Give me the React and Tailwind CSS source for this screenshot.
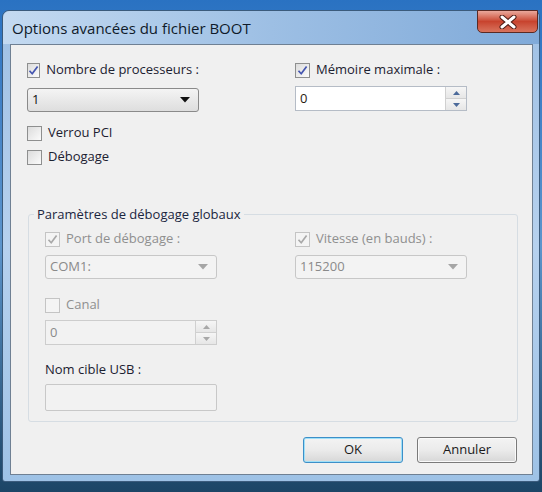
import React from "react";

const font = { fontFamily: '"Open Sans", "Noto Sans", "DejaVu Sans", sans-serif' };

function CheckBox({ checked, disabled }) {
  return (
    <span
      className={`flex items-center justify-center w-[15px] h-[15px] border ${
        disabled ? "border-[#c4c4c4] bg-[#f4f4f4]" : "border-[#8e8f8f] bg-gradient-to-br from-[#dcdcdc] to-[#fbfbfb]"
      }`}
    >
      {checked && (
        <svg width="11" height="11" viewBox="0 0 11 11">
          <path
            d="M1.5 5.8 L4.2 8.8 L9.6 1.4"
            fill="none"
            stroke={disabled ? "#a9a9a9" : "#4556b0"}
            strokeWidth="1.7"
            strokeLinejoin="round"
          />
        </svg>
      )}
    </span>
  );
}

function CheckRow({ label, checked, disabled, className = "" }) {
  return (
    <div className={`flex items-center h-[18px] gap-[6px] whitespace-nowrap ${className}`}>
      <CheckBox checked={checked} disabled={disabled} />
      <span className={`text-[13px] ${disabled ? "text-[#8f8f8f]" : "text-[#1c2130]"}`}>{label}</span>
    </div>
  );
}

function Select({ value, disabled, className = "" }) {
  return (
    <div
      className={`flex items-center justify-between w-[172px] h-[24px] rounded-[3px] border pl-[4px] pr-[8px] ${
        disabled
          ? "border-[#c7c7c7] bg-[#f3f3f3] text-[#8a8a8a]"
          : "border-[#8a8a8a] bg-gradient-to-b from-[#f4f4f4] to-[#dedede] text-[#111]"
      } ${className}`}
    >
      <span className="text-[13px]">{value}</span>
      <svg width="10" height="6" viewBox="0 0 10 6">
        <path d="M0 0 H10 L5 5.5 Z" fill={disabled ? "#a5a5a5" : "#111"} />
      </svg>
    </div>
  );
}

function Spin({ value, disabled, className = "" }) {
  const arrow = disabled ? "#a8a8a8" : "#4c6a9a";
  return (
    <div
      className={`flex w-[172px] h-[25px] border ${
        disabled ? "border-[#cdcdcd] bg-[#f2f2f2] text-[#8a8a8a]" : "border-[#b5bcc6] bg-white text-[#2a1a10]"
      } ${className}`}
    >
      <span className="flex-1 pl-[4px] text-[13px] leading-[23px]">{value}</span>
      <div className="flex flex-col w-[21px] border-l border-[#d0d0d0]">
        <div className="flex-1 flex items-center justify-center border-b border-[#d0d0d0] bg-gradient-to-b from-[#f6f6f6] to-[#e6e6e6]">
          <svg width="7" height="4" viewBox="0 0 7 4"><path d="M0 4 L3.5 0 L7 4 Z" fill={arrow} /></svg>
        </div>
        <div className="flex-1 flex items-center justify-center bg-gradient-to-b from-[#f6f6f6] to-[#e6e6e6]">
          <svg width="7" height="4" viewBox="0 0 7 4"><path d="M0 0 L3.5 4 L7 0 Z" fill={arrow} /></svg>
        </div>
      </div>
    </div>
  );
}

function Button({ label, focused }) {
  return (
    <button
      className={`w-[100px] h-[26px] rounded-[3px] border text-[13px] text-[#1a1a1a] bg-gradient-to-b from-[#f3f3f3] via-[#ebebeb] to-[#d7d7d7] ${
        focused ? "border-[#3c8fc8] shadow-[inset_0_0_0_1px_#9fe0f8]" : "border-[#7a7a7a] shadow-[inset_0_0_0_1px_#fafafa]"
      }`}
    >
      {label}
    </button>
  );
}

export default function App() {
  return (
    <div className="w-[542px] h-[492px] overflow-hidden bg-gradient-to-b from-[#2a72c2] via-[#5c95cc] to-[#1c4566] pt-[10px] pl-[2px]" style={font}>
      <div className="relative w-[538px] h-[472px] rounded-t-[7px] rounded-b-[3px] border border-[#3b5b7c] bg-gradient-to-b from-[#9fc0e4] via-[#b6d1ee] to-[#9ec2e6] flex flex-col">
        {/* title bar */}
        <div className="h-[33px] flex items-center pl-[9px] bg-gradient-to-r from-[#c4daf1] via-[#9dbfe4] to-[#80aad9] rounded-t-[7px]">
          <span className="text-[15px] text-[#0f1a2a] pt-[1px]">Options avancées du fichier BOOT</span>
        </div>
        <div className="absolute top-[-1px] right-[1px] w-[61px] h-[23px] rounded-b-[5px] border border-[#5a2a24] bg-gradient-to-b from-[#e9a89c] via-[#c8432e] to-[#d8735d] flex items-center justify-center">
          <svg width="18" height="14" viewBox="0 0 18 14">
            <path d="M3 2 L15 12 M15 2 L3 12" stroke="#4a1a14" strokeWidth="5" strokeLinecap="round" />
            <path d="M3 2 L15 12 M15 2 L3 12" stroke="#ffffff" strokeWidth="3" strokeLinecap="round" />
          </svg>
        </div>

        {/* client area */}
        <div className="ml-[7px] mr-[6px] mb-[6px] flex-1 border border-[#6f8093] bg-[#f0f0f0] flex flex-col pl-[16px] pt-[16px] pr-[15px]">
          <div className="flex gap-[96px]">
            <div className="w-[172px]">
              <CheckRow label="Nombre de processeurs :" checked />
              <Select value="1" className="mt-[9px]" />
            </div>
            <div>
              <CheckRow label="Mémoire maximale :" checked />
              <Spin value="0" className="mt-[7px]" />
            </div>
          </div>
          <CheckRow label="Verrou PCI" className="mt-[12px]" />
          <CheckRow label="Débogage" className="mt-[6px]" />

          <fieldset className="mt-[39px] ml-[1px] w-[490px] border border-[#d6dde3] rounded-[3px] pl-[16px] pb-[10px]">
            <legend className="ml-[-11px] px-[3px] text-[13px] leading-[18px] text-[#1b2640]">Paramètres de débogage globaux</legend>
            <div className="flex gap-[78px] mt-[7px]">
              <div className="w-[172px]">
                <CheckRow label="Port de débogage :" checked disabled />
                <Select value="COM1:" disabled className="mt-[7px]" />
              </div>
              <div>
                <CheckRow label="Vitesse (en bauds) :" checked disabled />
                <Select value="115200" disabled className="mt-[7px]" />
              </div>
            </div>
            <CheckRow label="Canal" disabled className="mt-[17px]" />
            <Spin value="0" disabled className="mt-[6px]" />
            <div className="mt-[16px] h-[18px] flex items-center text-[13px] text-[#1c2130]">Nom cible USB :</div>
            <div className="mt-[5px] w-[172px] h-[27px] rounded-[2px] border border-[#c8c8c8] bg-[#f2f2f2]" />
          </fieldset>

          <div className="flex justify-end gap-[14px] mt-[15px]">
            <Button label="OK" focused />
            <Button label="Annuler" />
          </div>
        </div>
      </div>
    </div>
  );
}
